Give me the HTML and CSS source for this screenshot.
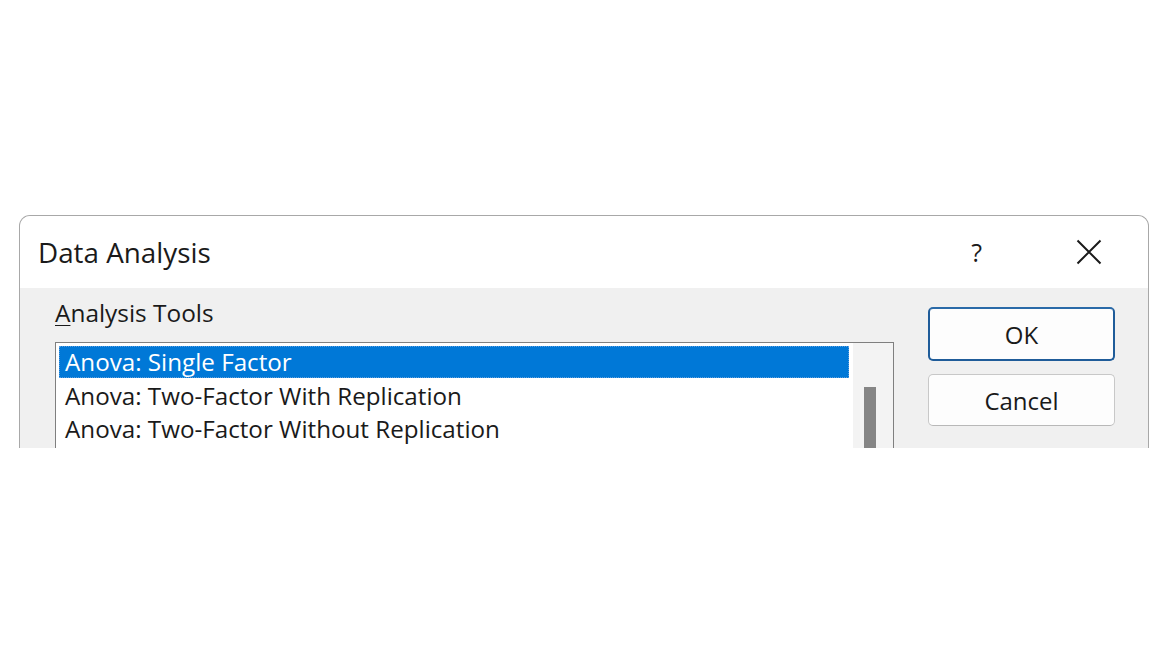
FILE: index.html
```html
<!DOCTYPE html>
<html>
<head>
<meta charset="utf-8">
<link rel="stylesheet" href="styles.css">
</head>
<body>
<div class="stage">
  <div class="dialog">
    <div class="titlebar">
      <span class="title">Data Analysis</span>
      <div class="controls">
        <span class="help">?</span>
        <svg class="close" width="26" height="26" viewBox="0 0 26 26"><path d="M1.5 1.5 L24.5 24.5 M24.5 1.5 L1.5 24.5" stroke="#1a1a1a" stroke-width="2" fill="none"/></svg>
      </div>
    </div>
    <div class="body">
      <div class="left">
        <div class="label"><span class="ul">A</span>nalysis Tools</div>
        <div class="listbox">
          <div class="items">
            <div class="row selected">Anova: Single Factor</div>
            <div class="row">Anova: Two-Factor With Replication</div>
            <div class="row">Anova: Two-Factor Without Replication</div>
          </div>
          <div class="scrollbar"><div class="thumb"></div></div>
        </div>
      </div>
      <div class="buttons">
        <div class="btn ok">OK</div>
        <div class="btn cancel">Cancel</div>
      </div>
    </div>
  </div>
</div>
</body>
</html>
```
FILE: styles.css
```css
html, body {
  margin: 0;
  padding: 0;
  background: #ffffff;
  font-family: "Open Sans", "Noto Sans", "Liberation Sans", sans-serif;
  color: #1a1a1a;
}
.stage {
  padding: 215px 0 0 19px;
}
.dialog {
  width: 1128px;
  height: 232px;
  border: 1px solid #a8a8a8;
  border-bottom: none;
  border-radius: 11px 11px 0 0;
  overflow: hidden;
  background: #f0f0f0;
  display: flex;
  flex-direction: column;
}
.titlebar {
  height: 72px;
  flex: none;
  background: #ffffff;
  display: flex;
  align-items: center;
  justify-content: space-between;
  padding: 0 46px 0 18px;
}
.title {
  font-size: 27.8px;
  line-height: 30px;
}
.controls {
  display: flex;
  align-items: center;
  gap: 94px;
}
.help {
  font-size: 25px;
  line-height: 30px;
}
.close {
  display: block;
}
.body {
  flex: 1;
  display: flex;
  padding: 19px 34px 0 35px;
  gap: 34px;
}
.left {
  width: 839px;
  flex: none;
  display: flex;
  flex-direction: column;
}
.label {
  font-size: 24.4px;
  line-height: 30px;
  height: 35px;
  margin-top: -9px;
  margin-bottom: 9px;
}
.ul {
  text-decoration: underline;
  text-decoration-thickness: 1px;
  text-underline-offset: 3px;
}
.listbox {
  height: 200px;
  border: 1px solid #7f7f7f;
  background: #ffffff;
  display: flex;
}
.items {
  flex: 1;
  padding: 3px 0 0 3px;
}
.row {
  height: 33px;
  font-size: 24.2px;
  line-height: 33px;
  padding-left: 6px;
  box-sizing: border-box;
  width: 790px;
  white-space: nowrap;
}
.row.selected {
  background: #0078d7;
  color: #ffffff;
  outline: 1px dotted #5a9fe0;
  outline-offset: -1px;
  height: 32px;
  line-height: 31px;
  margin-bottom: 1px;
}
.scrollbar {
  width: 40px;
  flex: none;
  background: #f3f3f3;
  display: flex;
  justify-content: center;
  box-sizing: border-box;
  padding: 44px 6px 0 0;
}
.thumb {
  width: 12px;
  height: 120px;
  background: #858585;
}
.buttons {
  width: 187px;
  flex: none;
  display: flex;
  flex-direction: column;
  gap: 13px;
}
.btn {
  box-sizing: border-box;
  border-radius: 5px;
  font-size: 24px;
  display: flex;
  align-items: center;
  justify-content: center;
  background: #fdfdfd;
}
.ok {
  height: 54px;
  border: 2px solid #1f5c99;
  border-top-color: #2a6aa8;
}
.cancel {
  height: 52px;
  border: 1px solid #c8c8c8;
  border-bottom-color: #b8b8b8;
}
```
